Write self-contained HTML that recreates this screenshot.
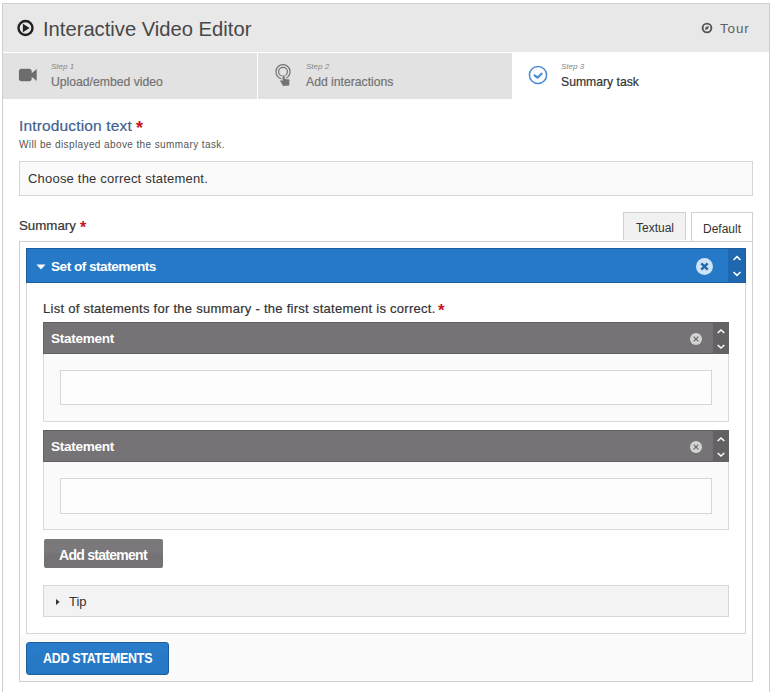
<!DOCTYPE html>
<html><head><meta charset="utf-8">
<style>
*{box-sizing:border-box;margin:0;padding:0}
html,body{width:770px;height:692px;overflow:hidden;background:#fff;font-family:"Liberation Sans",sans-serif}
.abs{position:absolute}
#frame{position:absolute;left:2px;top:3px;width:768px;height:720px;border:1px solid #cfcfcf;border-bottom:none;background:#fff}
#hdr{position:absolute;left:3px;top:4px;width:766px;height:48px;background:#e8e8e8}
#hline{position:absolute;left:3px;top:52px;width:766px;height:1px;background:#fff}
.tab{position:absolute;top:53px;height:46px;background:#e2e2e2}
.t{position:absolute;white-space:nowrap;line-height:1}
.sb{-webkit-text-stroke:0.2px currentColor}
.inp{position:absolute;border:1px solid #d6d6d6;background:#fafafa}
</style></head><body>
<div id="frame"></div>
<div id="hdr"></div>
<div id="hline"></div>
<!-- title -->
<svg class="abs" style="left:16px;top:19px" width="19" height="19" viewBox="0 0 19 19">
<circle cx="9.5" cy="9" r="7" fill="none" stroke="#222" stroke-width="2.4"/>
<path d="M6.9 4.8 L13.6 9 L6.9 13.2 Z" fill="#222"/>
</svg>
<div class="t" style="left:43px;top:18.5px;font-size:20.2px;color:#474747">Interactive Video Editor</div>
<svg class="abs" style="left:701px;top:22px" width="12" height="12" viewBox="0 0 12 12">
<circle cx="6" cy="6" r="4.4" fill="none" stroke="#555" stroke-width="1.9"/>
<path d="M3.9 8.1 L4.7 5.1 L7.9 4.1 L7.1 7.1 Z" fill="#555"/>
</svg>
<div class="t" style="left:720px;top:22px;font-size:13.4px;color:#5e5e5e;letter-spacing:0.9px">Tour</div>

<!-- tabs -->
<div class="tab" style="left:3px;width:254px"></div>
<div class="tab" style="left:258px;width:254px"></div>
<div class="tab" style="left:512px;width:257px;background:#fff"></div>
<svg class="abs" style="left:18px;top:68px" width="20" height="14" viewBox="0 0 20 14">
<rect x="0.9" y="0.8" width="12.8" height="12.4" rx="2.6" fill="#6d6d6d"/>
<path d="M13 5.8 L18.7 1.1 L18.7 12.9 L13 8.2 Z" fill="#6d6d6d"/>
</svg>
<div class="t" style="left:51px;top:63px;font-size:8px;font-style:italic;color:#888">Step 1</div>
<div class="t sb" style="left:51px;top:76px;font-size:12.2px;color:#737373">Upload/embed video</div>

<svg class="abs" style="left:273px;top:62px" width="20" height="26" viewBox="0 0 20 26">
<circle cx="10" cy="9.8" r="7.1" fill="none" stroke="#747474" stroke-width="1.2"/>
<circle cx="10" cy="9.8" r="4.4" fill="none" stroke="#747474" stroke-width="1.2"/>
<path d="M9.6 13.8 Q10.65 12.6 11.7 13.8 L11.7 17 L16.5 17.4 L16.2 23.6 L10 24 L7.1 18.8 Q7.4 18 8.2 18.3 L9.6 19 Z" fill="#747474" stroke="#e2e2e2" stroke-width="1.6" paint-order="stroke" stroke-linejoin="round"/>
</svg>
<div class="t" style="left:306px;top:63px;font-size:8px;font-style:italic;color:#888">Step 2</div>
<div class="t sb" style="left:306px;top:76px;font-size:12.2px;color:#737373">Add interactions</div>

<svg class="abs" style="left:527px;top:64px" width="22" height="22" viewBox="0 0 22 22">
<circle cx="11" cy="11" r="8.6" fill="none" stroke="#4a8cd2" stroke-width="1.5"/>
<path d="M7.6 11.3 L10.5 13.6 L14.6 9.7" fill="none" stroke="#4a8cd2" stroke-width="2.2" stroke-linecap="round" stroke-linejoin="round"/>
</svg>
<div class="t" style="left:561px;top:63px;font-size:8px;font-style:italic;color:#888">Step 3</div>
<div class="t sb" style="left:561px;top:76px;font-size:12.2px;color:#333">Summary task</div>

<!-- intro -->
<div class="t sb" style="left:19px;top:118px;font-size:15.5px;letter-spacing:0.15px;color:#3f5f8f">Introduction text</div>
<div class="t" style="left:136px;top:119px;font-size:18px;color:#c4161c;font-weight:bold">*</div>
<div class="t" style="left:19px;top:140px;font-size:10px;color:#555;letter-spacing:0.4px">Will be displayed above the summary task.</div>
<div class="inp" style="left:19px;top:161px;width:734px;height:35px"></div>
<div class="t" style="left:28px;top:172px;font-size:13px;letter-spacing:0.2px;color:#333">Choose the correct statement.</div>

<!-- summary -->
<div class="t sb" style="left:19px;top:219px;font-size:13.3px;color:#353535">Summary</div>
<div class="t" style="left:80px;top:220px;font-size:16px;color:#c4161c;font-weight:bold">*</div>
<div class="abs" style="left:623px;top:212px;width:63px;height:28px;border:1px solid #d0d0d0;border-bottom:none;background:#f1f1f1"></div>
<div class="t" style="left:636px;top:222px;font-size:12px;color:#333">Textual</div>
<div class="abs" style="left:19px;top:241px;width:734px;height:441px;border:1px solid #d0d0d0;background:#fbfbfb"></div>
<div class="abs" style="left:691px;top:212px;width:62px;height:30px;border:1px solid #d0d0d0;background:#fff"></div>
<div class="t" style="left:703px;top:223px;font-size:12px;color:#333">Default</div>
<div class="abs" style="left:20px;top:242px;width:732px;height:392px;background:#fff"></div>

<!-- group -->
<div class="abs" style="left:26px;top:248px;width:720px;height:35px;background:#2579c6;border:1px solid #1c5d9f"></div>
<div class="abs" style="left:728px;top:249px;width:17px;height:33px;background:#1f68b0"></div>
<svg class="abs" style="left:36px;top:264px" width="10" height="6" viewBox="0 0 10 6"><path d="M0.5 0.5 L9.5 0.5 L5 5.5 Z" fill="#fff"/></svg>
<div class="t" style="left:51px;top:260px;font-size:13.6px;font-weight:bold;color:#fff;letter-spacing:-0.5px">Set of statements</div>
<svg class="abs" style="left:695px;top:257px" width="19" height="19" viewBox="0 0 19 19">
<circle cx="9.5" cy="9.5" r="8.5" fill="#cde3f7"/>
<path d="M6.3 6.3 L12.7 12.7 M12.7 6.3 L6.3 12.7" stroke="#2468ab" stroke-width="2.4"/>
</svg>
<svg class="abs" style="left:731px;top:254px" width="12" height="24" viewBox="0 0 12 24">
<path d="M2.5 6 L6 2.6 L9.5 6" fill="none" stroke="#fff" stroke-width="1.5"/>
<path d="M2.5 18 L6 21.4 L9.5 18" fill="none" stroke="#fff" stroke-width="1.5"/>
</svg>
<div class="abs" style="left:26px;top:283px;width:720px;height:351px;border:1px solid #d6d6d6;border-top:none;background:#fff"></div>

<div class="t sb" style="left:43px;top:302px;font-size:13px;letter-spacing:0.27px;color:#333">List of statements for the summary - the first statement is correct.</div>
<div class="t" style="left:438px;top:302px;font-size:17px;color:#c4161c;font-weight:bold">*</div>

<!-- statement 1 -->
<div class="abs" style="left:43px;top:322px;width:686px;height:32px;background:#757375;border:1px solid #636163"></div>
<div class="abs" style="left:713px;top:323px;width:15px;height:30px;background:#636163"></div>
<div class="t" style="left:51px;top:332px;font-size:13.6px;font-weight:bold;color:#fff;letter-spacing:-0.3px">Statement</div>
<svg class="abs" style="left:689px;top:332px" width="14" height="14" viewBox="0 0 14 14">
<circle cx="7" cy="7" r="6" fill="#d3d3d3"/>
<path d="M4.6 4.6 L9.4 9.4 M9.4 4.6 L4.6 9.4" stroke="#6d6d6d" stroke-width="1.3"/>
</svg>
<svg class="abs" style="left:715px;top:324px" width="12" height="28" viewBox="0 0 12 28">
<path d="M2.7 9 L6 6 L9.3 9" fill="none" stroke="#fff" stroke-width="1.5"/>
<path d="M2.7 21 L6 24 L9.3 21" fill="none" stroke="#fff" stroke-width="1.5"/>
</svg>
<div class="abs" style="left:43px;top:354px;width:686px;height:68px;border:1px solid #d9d9d9;border-top:none;background:#fafafa"></div>
<div class="abs" style="left:60px;top:370px;width:652px;height:35px;border:1px solid #d6d6d6;background:#fdfdfd"></div>

<!-- statement 2 -->
<div class="abs" style="left:43px;top:430px;width:686px;height:32px;background:#757375;border:1px solid #636163"></div>
<div class="abs" style="left:713px;top:431px;width:15px;height:30px;background:#636163"></div>
<div class="t" style="left:51px;top:440px;font-size:13.6px;font-weight:bold;color:#fff;letter-spacing:-0.3px">Statement</div>
<svg class="abs" style="left:689px;top:440px" width="14" height="14" viewBox="0 0 14 14">
<circle cx="7" cy="7" r="6" fill="#d3d3d3"/>
<path d="M4.6 4.6 L9.4 9.4 M9.4 4.6 L4.6 9.4" stroke="#6d6d6d" stroke-width="1.3"/>
</svg>
<svg class="abs" style="left:715px;top:432px" width="12" height="28" viewBox="0 0 12 28">
<path d="M2.7 9 L6 6 L9.3 9" fill="none" stroke="#fff" stroke-width="1.5"/>
<path d="M2.7 21 L6 24 L9.3 21" fill="none" stroke="#fff" stroke-width="1.5"/>
</svg>
<div class="abs" style="left:43px;top:462px;width:686px;height:68px;border:1px solid #d9d9d9;border-top:none;background:#fafafa"></div>
<div class="abs" style="left:60px;top:478px;width:652px;height:36px;border:1px solid #d6d6d6;background:#fdfdfd"></div>

<!-- add statement -->
<div class="abs" style="left:44px;top:539px;width:119px;height:29px;background:linear-gradient(#7a787a 0%,#7a787a 45%,#747274 55%,#747274 100%);border-radius:2px"></div>
<div class="t" style="left:59px;top:548px;font-size:14px;font-weight:bold;color:#fff;letter-spacing:-0.72px">Add statement</div>

<!-- tip -->
<div class="abs" style="left:43px;top:585px;width:686px;height:32px;border:1px solid #d6d6d6;background:#f3f3f3"></div>
<svg class="abs" style="left:56px;top:598px" width="5" height="8" viewBox="0 0 5 8"><path d="M0 1 L3.6 4 L0 7 Z" fill="#333"/></svg>
<div class="t" style="left:69px;top:595px;font-size:13px;color:#333">Tip</div>

<!-- add statements -->
<div class="abs" style="left:26px;top:642px;width:143px;height:33px;background:linear-gradient(#2a7dca,#2576c3);border-radius:3px;border:1px solid #1c5d9f"></div>
<div class="t" style="left:42.5px;top:651px;font-size:14.2px;font-weight:bold;color:#fff;letter-spacing:-0.3px;transform:scaleX(0.877);transform-origin:0 0">ADD STATEMENTS</div>
</body></html>
